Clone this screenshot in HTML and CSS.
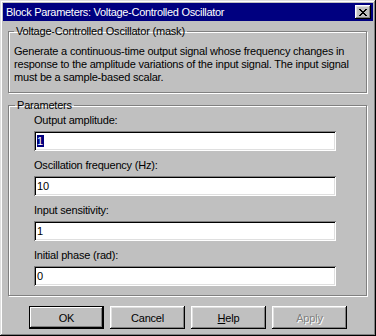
FILE: index.html
```html
<!DOCTYPE html>
<html lang="en">
<head>
  <meta charset="UTF-8">
  <title>Block Parameters: Voltage-Controlled Oscillator</title>
  <link rel="stylesheet" href="styles.css">
</head>
<body>
  <div class="window">
    <div class="title-bar">
      <span class="title-text">Block Parameters: Voltage-Controlled Oscillator</span>
      <button class="close-btn" aria-label="Close">
        <svg width="8" height="7" viewBox="0 0 8 7" shape-rendering="crispEdges">
          <path d="M0 0h2v1h-2z M6 0h2v1h-2z M1 1h2v1h-2z M5 1h2v1h-2z M2 2h4v1h-4z M3 3h2v1h-2z M2 4h4v1h-4z M1 5h2v1h-2z M5 5h2v1h-2z M0 6h2v1h-2z M6 6h2v1h-2z" fill="#000"/>
        </svg>
      </button>
    </div>

    <fieldset class="group description">
      <legend>Voltage-Controlled Oscillator (mask)</legend>
      <p>Generate a continuous-time output signal whose frequency changes in<br>
        response to the amplitude variations of the input signal. The input signal<br>
        must be a sample-based scalar.</p>
    </fieldset>

    <fieldset class="group params">
      <legend>Parameters</legend>
      <div class="field">
        <label>Output amplitude:</label>
        <div class="textbox"><span class="selected">1</span></div>
      </div>
      <div class="field">
        <label>Oscillation frequency (Hz):</label>
        <div class="textbox">10</div>
      </div>
      <div class="field">
        <label>Input sensitivity:</label>
        <div class="textbox">1</div>
      </div>
      <div class="field">
        <label>Initial phase (rad):</label>
        <div class="textbox">0</div>
      </div>
    </fieldset>

    <div class="buttons">
      <button class="btn default">OK</button>
      <button class="btn">Cancel</button>
      <button class="btn"><u>H</u>elp</button>
      <button class="btn disabled">Apply</button>
    </div>
  </div>
</body>
</html>
```

FILE: styles.css
```css
body {
  margin: 0;
  background: #c0c0c0;
  font-family: "Liberation Sans", Arial, sans-serif;
  font-size: 11px;
  letter-spacing: -0.2px;
  color: #000;
}

.window {
  width: 376px;
  height: 336px;
  box-sizing: border-box;
  padding: 3px;
  background: #c0c0c0;
  box-shadow: inset -1px -1px #000, inset 1px 1px #dfdfdf,
              inset -2px -2px #808080, inset 2px 2px #fff;
}

.title-bar {
  height: 18px;
  background: #000080;
  color: #fff;
  display: flex;
  align-items: center;
  justify-content: space-between;
  padding: 0 2px 0 3px;
}

.title-text {
  line-height: 18px;
  letter-spacing: -0.3px;
}

.close-btn {
  width: 16px;
  height: 14px;
  padding: 0;
  border: none;
  background: #c0c0c0;
  display: flex;
  align-items: center;
  justify-content: center;
  box-shadow: inset -1px -1px #000, inset 1px 1px #fff,
              inset -2px -2px #808080, inset 2px 2px #dfdfdf;
}

/* group boxes */
.group {
  margin: 4px 6px 0 5px;
  border: 1px solid #808080;
  box-shadow: inset 1px 1px #fff, 1px 1px #fff;
  min-width: 0;
}

.group legend {
  padding: 0 2px;
  line-height: 13px;
}

.description {
  padding: 7px 5px 8px 5px;
}

.description legend {
  margin-left: 0;
}

.description p {
  margin: 0;
  line-height: 13px;
  white-space: nowrap;
}

.params {
  margin-top: 6px;
  padding: 2px 30px 9px 25px;
  display: flex;
  flex-direction: column;
  gap: 8px;
}

.params legend {
  margin-left: -19px;
}

.field label {
  display: block;
  line-height: 13px;
  margin-bottom: 4px;
}

.textbox {
  height: 20px;
  box-sizing: border-box;
  background: #fff;
  padding: 2px 0 0 3px;
  line-height: 16px;
  box-shadow: inset 1px 1px #808080, inset -1px -1px #fff,
              inset 2px 2px #000, inset -2px -2px #dfdfdf;
}

.selected {
  background: #000080;
  color: #fff;
  padding: 0 1px 0 0;
}

/* buttons */
.buttons {
  display: flex;
  justify-content: center;
  gap: 6px;
  margin-top: 10px;
}

.btn {
  width: 75px;
  height: 23px;
  padding: 0;
  border: none;
  background: #c0c0c0;
  font-family: inherit;
  font-size: 11px;
  letter-spacing: -0.2px;
  color: #000;
  box-shadow: inset -1px -1px #000, inset 1px 1px #fff,
              inset -2px -2px #808080, inset 2px 2px #dfdfdf;
}

.btn.default {
  box-shadow: inset 0 0 0 1px #000, inset -2px -2px #000, inset 2px 2px #fff,
              inset -3px -3px #808080;
}

.btn.disabled {
  color: #808080;
  text-shadow: 1px 1px #fff;
}
```
